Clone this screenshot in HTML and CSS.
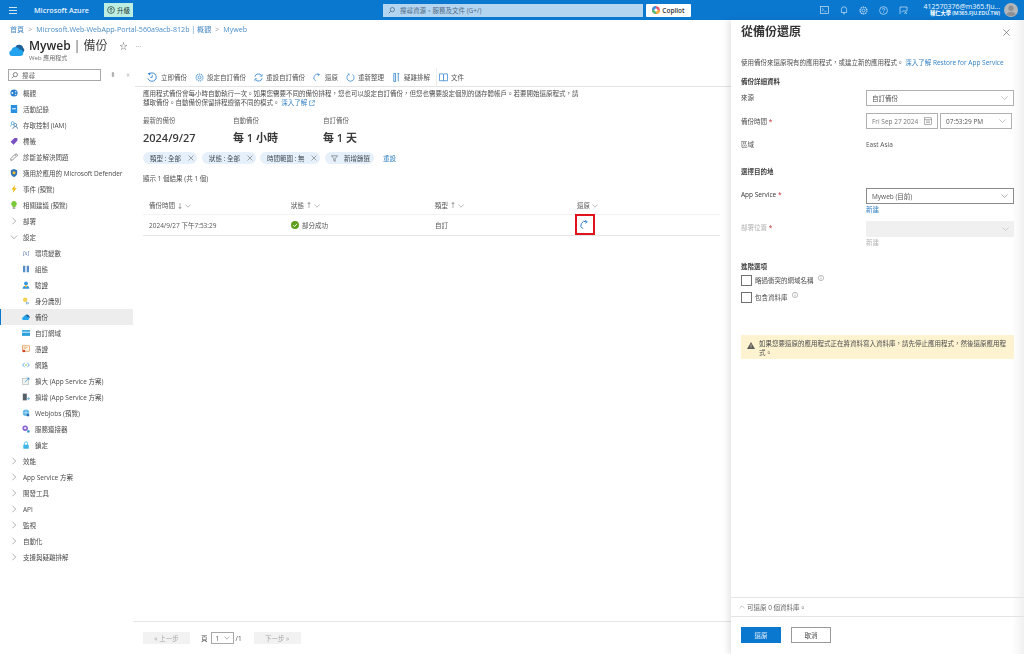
FILE: index.html
```html
<!DOCTYPE html>
<html lang="zh-Hant">
<head>
<meta charset="utf-8">
<title>Myweb | 備份</title>
<link rel="stylesheet" href="styles.css">
</head>
<body>
<div class="app">
  <header class="topbar">
    <svg class="hamburger" width="8" height="7" viewBox="0 0 8 7"><path d="M0 .5h8M0 3.5h8M0 6.5h8" stroke="#cfe4f6" stroke-width="1"/></svg>
    <span class="brand">Microsoft Azure</span>
    <button class="upgrade"><svg width="8" height="8" viewBox="0 0 8 8"><circle cx="4" cy="4" r="3.4" fill="none" stroke="#1b3a34" stroke-width=".7"/><path d="M4 6V2.300M2.600 3.600 4 2.200l1.400 1.400" fill="none" stroke="#1b3a34" stroke-width=".7"/></svg>升級</button>
    <div class="global-search"><svg width="7" height="7" viewBox="0 0 8 8"><circle cx="5" cy="3" r="2.400" fill="none" stroke="#44607a" stroke-width=".8"/><path d="M3.200 4.800.8 7.200" stroke="#44607a" stroke-width=".8"/></svg><span>搜尋資源、服務及文件 (G+/)</span></div>
    <button class="copilot"><svg width="8" height="8" viewBox="0 0 8 8"><circle cx="4" cy="4" r="3.800" fill="#e8536b"/><path d="M4 4 8 4A4 4 0 0 1 4 8Z" fill="#f2a93b"/><path d="M4 4V8A4 4 0 0 1 0 4Z" fill="#5bb974"/><path d="M4 4H0A4 4 0 0 1 4 0Z" fill="#3f8fe0"/><circle cx="4" cy="4" r="1.600" fill="#fff"/></svg>Copilot</button>
    <div class="top-icons">
      <svg width="9" height="8" viewBox="0 0 9 8"><rect x=".4" y=".4" width="8.200" height="7.200" fill="none" stroke="#cfe4f6" stroke-width=".7"/><path d="m2 2.400 1.600 1.400L2 5.200M4.400 5.400h2" fill="none" stroke="#cfe4f6" stroke-width=".6"/></svg>
      <svg width="8" height="9" viewBox="0 0 8 9"><path d="M1.400 6.500V3.400a2.600 2.600 0 0 1 5.200 0v3.100ZM3 7.800h2" fill="none" stroke="#cfe4f6" stroke-width=".7"/></svg>
      <svg width="9" height="9" viewBox="0 0 9 9"><circle cx="4.500" cy="4.500" r="1.400" fill="none" stroke="#cfe4f6" stroke-width=".7"/><circle cx="4.500" cy="4.500" r="3.400" fill="none" stroke="#cfe4f6" stroke-width="1.200" stroke-dasharray="1.400 .7"/></svg>
      <svg width="9" height="9" viewBox="0 0 9 9"><circle cx="4.500" cy="4.500" r="3.900" fill="none" stroke="#cfe4f6" stroke-width=".7"/><path d="M3.300 3.500a1.200 1.200 0 1 1 1.700 1.100c-.4.2-.5.4-.5.8M4.500 6.200v.6" fill="none" stroke="#cfe4f6" stroke-width=".7"/></svg>
      <svg width="9" height="9" viewBox="0 0 9 9"><path d="M1 8V1h7v4H4L2.500 6M5.600 8l1-2 1.300 2" fill="none" stroke="#cfe4f6" stroke-width=".7"/></svg>
    </div>
    <div class="account">
      <span class="account-name">412570376@m365.fju...</span>
      <span class="account-org">輔仁大學 (M365.FJU.EDU.TW)</span>
    </div>
    <svg class="avatar" width="14" height="14" viewBox="0 0 14 14"><circle cx="7" cy="7" r="7" fill="#b4b7ba"/><circle cx="7" cy="5.200" r="2.600" fill="#8d9094"/><path d="M2.400 11.400a4.800 3.800 0 0 1 9.200 0 7 7 0 0 1-9.200 0Z" fill="#8d9094"/></svg>
  </header>

  <nav class="breadcrumb">
    <a>首頁</a><i>&gt;</i><a>Microsoft.Web-WebApp-Portal-560a9acb-812b | 概觀</a><i>&gt;</i><a>Myweb</a>
  </nav>

  <div class="page-head">
    <svg class="page-icon" width="16" height="16" viewBox="0 0 16 16"><path d="M6 6.500a4.200 4.200 0 0 1 8.200-.6 2.700 2.700 0 0 1 .3 4.100H8Z" fill="#1d6298"/><path d="M3 14a2.900 2.900 0 0 1-.6-5.700 4.200 4.200 0 0 1 8-.7 3.200 3.200 0 0 1 1.200 6.400Z" fill="#23a3ee"/></svg>
    <div class="page-titles">
      <h1>Myweb <span class="bar">|</span> <span class="thin">備份</span><span class="star">☆</span><span class="dots">···</span></h1>
      <p>Web 應用程式</p>
    </div>
  </div>

  <div class="workspace">
    <aside class="sidebar">
      <div class="side-search-row">
        <div class="side-search"><svg width="7" height="7" viewBox="0 0 8 8"><circle cx="5" cy="3" r="2.400" fill="none" stroke="#555" stroke-width=".8"/><path d="M3.200 4.800.8 7.200" stroke="#555" stroke-width=".8"/></svg><span>搜尋</span></div>
        <span class="side-tool">⬍</span><span class="side-tool">«</span>
      </div>
      <ul class="nav">
        <li class="item"><svg viewBox="0 0 10 10"><circle cx="5" cy="5" r="4.500" fill="#2a7fd0"/><circle cx="3" cy="5" r="1.100" fill="#fff"/><circle cx="7" cy="3.400" r="1" fill="#cfe4f6"/><circle cx="7" cy="6.800" r="1" fill="#cfe4f6"/></svg>概觀</li>
        <li class="item"><svg viewBox="0 0 10 10"><rect x="1" y="0" width="8" height="10" fill="#2a8fe0"/><rect x="2.600" y="4" width="4.800" height="1.400" fill="#e6f2fb"/></svg>活動記錄</li>
        <li class="item"><svg viewBox="0 0 10 10"><circle cx="3.400" cy="2.600" r="1.800" fill="none" stroke="#3f9ad8" stroke-width=".9"/><circle cx="6.600" cy="5" r="1.800" fill="none" stroke="#3b6f9e" stroke-width=".9"/><path d="M3.400 10a3.200 3 0 0 1 6.400 0" fill="none" stroke="#3b6f9e" stroke-width=".9"/><path d="M.4 7a3 3 0 0 1 2-2.400" fill="none" stroke="#3f9ad8" stroke-width=".9"/></svg>存取控制 (IAM)</li>
        <li class="item"><svg viewBox="0 0 10 10"><path d="M.8 6 5.600 1.200h3.600v3.600L4.400 9.600Z" fill="#7a4fc0"/></svg>標籤</li>
        <li class="item"><svg viewBox="0 0 10 10"><path d="M1 9 1 7 6 2l2 2-5 5ZM6.400 1.600a1.700 1.700 0 0 1 2.400 2.400" fill="none" stroke="#555" stroke-width=".8"/></svg>診斷並解決問題</li>
        <li class="item"><svg viewBox="0 0 10 10"><path d="M5 0 9 1.600V5c0 2.600-2 4.200-4 5-2-.8-4-2.400-4-5V1.600Z" fill="#2f72b8"/><circle cx="5" cy="4.600" r="1.900" fill="#f2c230"/></svg>適用於應用的 Microsoft Defender</li>
        <li class="item"><svg viewBox="0 0 10 10"><path d="M6.400 0 2 5.600h2.600L3.200 10 8.200 4H5.400Z" fill="#f0b400"/></svg>事件 (預覽)</li>
        <li class="item"><svg viewBox="0 0 10 10"><path d="M5 0a3.400 3.400 0 0 1 2 6.200V7.600H3V6.200A3.400 3.400 0 0 1 5 0Z" fill="#7cc83b"/><rect x="3.400" y="8" width="3.200" height="1.600" fill="#7f8a80"/></svg>相關建議 (預覽)</li>
        <li class="group"><svg viewBox="0 0 8 8"><path d="m2.500.8 3.200 3.200-3.200 3.200" fill="none" stroke="#777" stroke-width=".6"/></svg>部署</li>
        <li class="group"><svg viewBox="0 0 8 8"><path d="m.8 2.500 3.200 3.200 3.200-3.200" fill="none" stroke="#777" stroke-width=".6"/></svg>設定</li>
        <li class="item child"><span class="var-ico">[x]</span>環境變數</li>
        <li class="item child"><svg viewBox="0 0 10 10"><path d="M1.500 1h2v8h-2ZM6.500 1h2v8h-2Z" fill="#2f72b8"/><path d="M4.200 1h1.600v8H4.200Z" fill="#a6cdea"/></svg>組態</li>
        <li class="item child"><svg viewBox="0 0 10 10"><circle cx="5" cy="3" r="2.400" fill="#3596e0"/><path d="M.8 9.600a4.200 3.800 0 0 1 8.400 0Z" fill="#3596e0"/><rect x="3.800" y="5.200" width="2.400" height="2.400" fill="#f2c230"/></svg>驗證</li>
        <li class="item child"><svg viewBox="0 0 10 10"><circle cx="4" cy="3.400" r="2.800" fill="#f2d256"/><path d="M4.600 6h1.600l.6 3.400H5.400Z" fill="#88b8d8"/><circle cx="7.600" cy="7.600" r="1.400" fill="#9fc6e2"/></svg>身分識別</li>
        <li class="item child active"><svg viewBox="0 0 16 16"><path d="M6 6.500a4.200 4.200 0 0 1 8.200-.6 2.700 2.700 0 0 1 .3 4.100H8Z" fill="#1d6298"/><path d="M3 14a2.900 2.900 0 0 1-.6-5.700 4.200 4.200 0 0 1 8-.7 3.200 3.200 0 0 1 1.200 6.400Z" fill="#23a3ee"/></svg>備份</li>
        <li class="item child"><svg viewBox="0 0 10 10"><rect y="1.400" width="10" height="7.200" fill="#2aa0dc"/><rect y="3.400" width="10" height="1.200" fill="#e8f6fc"/></svg>自訂網域</li>
        <li class="item child"><svg viewBox="0 0 10 10"><rect x=".5" y="1" width="9" height="6.800" fill="#fff4e8" stroke="#d88a3a" stroke-width=".8"/><path d="M2 3h5M2 4.600h3" stroke="#d88a3a" stroke-width=".6"/><circle cx="2.400" cy="7.600" r="1.600" fill="#d83b2b"/></svg>憑證</li>
        <li class="item child"><svg viewBox="0 0 10 10"><path d="M3.400 2.200.8 5l2.600 2.800M6.600 2.200 9.200 5 6.600 7.800" fill="none" stroke="#3f9ad8" stroke-width="1"/><circle cx="5" cy="5" r="1" fill="#7fb33a"/></svg>網路</li>
        <li class="item child"><svg viewBox="0 0 10 10"><rect x=".8" y="1.600" width="7.600" height="7.600" fill="#eef2f0" stroke="#a5b0a8" stroke-width=".7"/><path d="M3.600 6.400 8.600 1.400M6 1.200h2.800V4" fill="none" stroke="#3f9ad8" stroke-width=".9"/></svg>擴大 (App Service 方案)</li>
        <li class="item child"><svg viewBox="0 0 10 10"><rect x="1" y=".8" width="5" height="8.400" fill="#57606a"/><path d="M5.400 7h4M7.600 5.200 9.400 7 7.600 8.800" fill="none" stroke="#3f9ad8" stroke-width=".9"/></svg>擴增 (App Service 方案)</li>
        <li class="item child"><svg viewBox="0 0 10 10"><circle cx="5" cy="4.600" r="4" fill="#58b4e8"/><path d="M1.400 4.600h7.200M5 .8v7.600" stroke="#e8f6fc" stroke-width=".6"/><circle cx="7.400" cy="7.600" r="1.800" fill="#2d6fae"/></svg>WebJobs (預覽)</li>
        <li class="item child"><svg viewBox="0 0 10 10"><circle cx="4" cy="4" r="3.400" fill="#8a63d2"/><circle cx="4" cy="4" r="1.400" fill="#f3eefb"/><circle cx="8" cy="8" r="1.600" fill="#3f9ad8"/></svg>服務連接器</li>
        <li class="item child"><svg viewBox="0 0 10 10"><path d="M3 5V3a2 2 0 0 1 4 0v2" fill="none" stroke="#3fb4e8" stroke-width="1"/><rect x="1.600" y="4.600" width="6.800" height="5.200" rx=".6" fill="#3fb4e8"/></svg>鎖定</li>
        <li class="group"><svg viewBox="0 0 8 8"><path d="m2.500.8 3.200 3.200-3.200 3.200" fill="none" stroke="#777" stroke-width=".6"/></svg>效能</li>
        <li class="group"><svg viewBox="0 0 8 8"><path d="m2.500.8 3.200 3.200-3.200 3.200" fill="none" stroke="#777" stroke-width=".6"/></svg>App Service 方案</li>
        <li class="group"><svg viewBox="0 0 8 8"><path d="m2.500.8 3.200 3.200-3.200 3.200" fill="none" stroke="#777" stroke-width=".6"/></svg>開發工具</li>
        <li class="group"><svg viewBox="0 0 8 8"><path d="m2.500.8 3.200 3.200-3.200 3.200" fill="none" stroke="#777" stroke-width=".6"/></svg>API</li>
        <li class="group"><svg viewBox="0 0 8 8"><path d="m2.500.8 3.200 3.200-3.200 3.200" fill="none" stroke="#777" stroke-width=".6"/></svg>監視</li>
        <li class="group"><svg viewBox="0 0 8 8"><path d="m2.500.8 3.200 3.200-3.200 3.200" fill="none" stroke="#777" stroke-width=".6"/></svg>自動化</li>
        <li class="group"><svg viewBox="0 0 8 8"><path d="m2.500.8 3.200 3.200-3.200 3.200" fill="none" stroke="#777" stroke-width=".6"/></svg>支援與疑難排解</li>
      </ul>
    </aside>

    <main class="content">
      <div class="toolbar">
        <span class="tool"><svg class="first" viewBox="0 0 10 10"><path d="M1 6.400A4.200 4.200 0 1 0 3 1.400" fill="none" stroke="#2a7fd0" stroke-width=".9"/><path d="M5.200 2.800v2.600H3.200" fill="none" stroke="#2a7fd0" stroke-width=".8"/><path d="M.6 1.400 3.400 .6 3 3.400Z" fill="#2a7fd0"/></svg>立即備份</span>
        <span class="tool"><svg viewBox="0 0 10 10"><circle cx="5" cy="5" r="3.800" fill="none" stroke="#6ba6da" stroke-width="1.400" stroke-dasharray="1.400 .7"/><circle cx="5" cy="5" r="1.600" fill="none" stroke="#2a7fd0" stroke-width=".8"/></svg>設定自訂備份</span>
        <span class="tool"><svg viewBox="0 0 10 10"><path d="M1 4.200A4 4 0 0 1 8.400 3M9 5.800A4 4 0 0 1 1.600 7" fill="none" stroke="#2a7fd0" stroke-width=".9"/><path d="M9 1v2.600H6.400M1 9V6.400h2.600" fill="none" stroke="#2a7fd0" stroke-width=".7"/></svg>重設自訂備份</span>
        <span class="tool"><svg viewBox="0 0 10 10"><path d="M6.600 1.800A3.800 3.800 0 0 0 3 8.800" fill="none" stroke="#2a7fd0" stroke-width=".8"/><path d="M5 .4 7.400 1.800 5.400 3.400" fill="none" stroke="#2a7fd0" stroke-width=".7"/></svg>還原</span>
        <span class="tool"><svg viewBox="0 0 10 10"><path d="M3 1.600A4 4 0 1 0 7 1.600" fill="none" stroke="#2a7fd0" stroke-width=".8"/><path d="M1.600 1h2v2" fill="none" stroke="#2a7fd0" stroke-width=".6"/></svg>重新整理</span>
        <span class="tool"><svg viewBox="0 0 10 10"><path d="M2 .6h2v8.800H2ZM6 .6h2" fill="none" stroke="#2a7fd0" stroke-width=".9"/><path d="M7 .6v8.800" stroke="#6ba6da" stroke-width="1.200"/></svg>疑難排解</span>
        <span class="tool doc"><svg viewBox="0 0 10 10"><path d="M.6 1h3.800c.3 0 .6.3.6.6.1-.3.3-.6.6-.6h3.800v7.600H.6Z" fill="none" stroke="#2a7fd0" stroke-width=".8"/><path d="M5 1.600v7" stroke="#2a7fd0" stroke-width=".9"/></svg>文件</span>
      </div>

      <div class="body">
        <p class="intro">應用程式備份會每小時自動執行一次。如果您需要不同的備份排程，您也可以設定自訂備份，但您也需要設定個別的儲存體帳戶。若要開始還原程式，請<br>擷取備份。自動備份保留排程遵循不同的模式。 <a>深入了解 <svg width="6" height="6" viewBox="0 0 6 6"><path d="M2.400 1H.5v4.500h4.500V3.600M3.400.5h2.100v2.100M5.400.6 2.800 3.200" fill="none" stroke="#0f6cbd" stroke-width=".5"/></svg></a></p>

        <div class="summary">
          <div class="stat"><span>最新的備份</span><strong>2024/9/27</strong></div>
          <div class="stat"><span>自動備份</span><strong>每 1 小時</strong></div>
          <div class="stat"><span>自訂備份</span><strong>每 1 天</strong></div>
        </div>

        <div class="filters">
          <span class="pill">類型 : 全部<svg width="6" height="6" viewBox="0 0 6 6"><path d="m.5.5 5 5m0-5-5 5" stroke="#555" stroke-width=".5"/></svg></span>
          <span class="pill">狀態 : 全部<svg width="6" height="6" viewBox="0 0 6 6"><path d="m.5.5 5 5m0-5-5 5" stroke="#555" stroke-width=".5"/></svg></span>
          <span class="pill">時間範圍 : 無<svg width="6" height="6" viewBox="0 0 6 6"><path d="m.5.5 5 5m0-5-5 5" stroke="#555" stroke-width=".5"/></svg></span>
          <span class="pill add"><svg width="7" height="7" viewBox="0 0 7 7"><path d="M.4.8h6.200L4.200 3.600v2.800L2.800 5.600v-2Z" fill="none" stroke="#444" stroke-width=".5"/></svg>新增篩選</span>
          <a class="reset">重設</a>
        </div>

        <p class="count">顯示 1 個結果 (共 1 個)</p>

        <div class="table">
          <div class="row head">
            <span>備份時間 ↓ <svg width="6" height="4" viewBox="0 0 6 4"><path d="m.4.6 2.600 2.600L5.600.6" fill="none" stroke="#777" stroke-width=".5"/></svg></span>
            <span>狀態 ↑ <svg width="6" height="4" viewBox="0 0 6 4"><path d="m.4.6 2.600 2.600L5.600.6" fill="none" stroke="#777" stroke-width=".5"/></svg></span>
            <span>類型 ↑ <svg width="6" height="4" viewBox="0 0 6 4"><path d="m.4.6 2.600 2.600L5.600.6" fill="none" stroke="#777" stroke-width=".5"/></svg></span>
            <span>還原 <svg width="6" height="4" viewBox="0 0 6 4"><path d="m.4.6 2.600 2.600L5.600.6" fill="none" stroke="#777" stroke-width=".5"/></svg></span>
          </div>
          <div class="row data">
            <span>2024/9/27 下午7:53:29</span>
            <span class="status"><svg width="8" height="8" viewBox="0 0 8 8"><circle cx="4" cy="4" r="4" fill="#5c9e1c"/><path d="m2 4.100 1.500 1.500L6 2.800" fill="none" stroke="#fff" stroke-width=".9"/></svg>部分成功</span>
            <span>自訂</span>
            <span class="restore-cell"><span class="restore-mark"><svg width="10" height="10" viewBox="0 0 10 10"><path d="M6.600 1.800A3.800 3.800 0 0 0 3 8.800" fill="none" stroke="#2a7fd0" stroke-width="1"/><path d="M5 .4 7.400 1.800 5.400 3.400" fill="none" stroke="#2a7fd0" stroke-width=".8"/></svg></span></span>
          </div>
        </div>
      </div>

      <div class="pager">
        <button class="page-btn">« 上一步</button>
        <span class="page-label">頁</span>
        <span class="page-select">1<svg width="6" height="4" viewBox="0 0 6 4"><path d="m.4.6 2.600 2.600L5.600.6" fill="none" stroke="#666" stroke-width=".5"/></svg></span>
        <span class="page-label">/1</span>
        <button class="page-btn next">下一步 »</button>
      </div>
    </main>
  </div>

  <section class="panel">
    <div class="panel-head">
      <h2>從備份還原</h2>
      <svg width="7" height="7" viewBox="0 0 7 7"><path d="m.4.4 6.200 6.200m0-6.200L.4 6.600" stroke="#555" stroke-width=".6"/></svg>
    </div>
    <div class="panel-body">
      <p class="panel-intro">使用備份來還原現有的應用程式，或建立新的應用程式。 <a>深入了解 Restore for App Service</a></p>
      <h3 class="sec first">備份詳細資料</h3>
      <div class="field r-source"><label>來源</label><div class="select">自訂備份<svg width="7" height="4" viewBox="0 0 7 4"><path d="m.4.4 3.100 3.100L6.600.4" fill="none" stroke="#888" stroke-width=".5"/></svg></div></div>
      <div class="field r-time"><label>備份時間 <em>*</em></label>
        <div class="dt">
          <div class="select date">Fri Sep 27 2024<svg width="8" height="8" viewBox="0 0 8 8"><rect x=".3" y=".8" width="7.400" height="6.900" fill="none" stroke="#666" stroke-width=".5"/><path d="M.3 2.600h7.400M2 4h4M2 5.600h4" stroke="#666" stroke-width=".5"/></svg></div>
          <div class="select time">07:53:29 PM<svg width="7" height="4" viewBox="0 0 7 4"><path d="m.4.4 3.100 3.100L6.600.4" fill="none" stroke="#888" stroke-width=".5"/></svg></div>
        </div>
      </div>
      <div class="field r-region"><label>區域</label><span class="value">East Asia</span></div>
      <h3 class="sec dest">選擇目的地</h3>
      <div class="field r-app"><label>App Service <em>*</em></label>
        <div class="stack"><div class="select strong">Myweb (目前)<svg width="7" height="4" viewBox="0 0 7 4"><path d="m.4.4 3.100 3.100L6.600.4" fill="none" stroke="#666" stroke-width=".5"/></svg></div><a class="new">新建</a></div>
      </div>
      <div class="field r-deploy disabled"><label>部署位置 <em>*</em></label>
        <div class="stack"><div class="select off"><svg width="7" height="4" viewBox="0 0 7 4"><path d="m.4.4 3.100 3.100L6.600.4" fill="none" stroke="#aaa" stroke-width=".5"/></svg></div><a class="new">新建</a></div>
      </div>
      <h3 class="sec adv">進階選項</h3>
      <label class="check"><span class="box"></span>略過衝突的網域名稱<svg width="6" height="6" viewBox="0 0 6 6"><circle cx="3" cy="3" r="2.700" fill="none" stroke="#666" stroke-width=".4"/><path d="M3 2.600v2M3 1.400v.6" stroke="#666" stroke-width=".5"/></svg></label>
      <label class="check"><span class="box"></span>包含資料庫<svg width="6" height="6" viewBox="0 0 6 6"><circle cx="3" cy="3" r="2.700" fill="none" stroke="#666" stroke-width=".4"/><path d="M3 2.600v2M3 1.400v.6" stroke="#666" stroke-width=".5"/></svg></label>
      <div class="warn"><svg width="8" height="7" viewBox="0 0 8 7"><path d="M4 0 8 7H0Z" fill="#605e5c"/><path d="M4 2.400v2.400M4 5.400v.6" stroke="#fff4ce" stroke-width=".6"/></svg><p>如果您要還原的應用程式正在將資料寫入資料庫，請先停止應用程式，然後還原應用程式。</p></div>
    </div>
    <div class="panel-note"><svg width="6" height="4" viewBox="0 0 6 4"><path d="m.4 3.400 2.600-2.600 2.600 2.600" fill="none" stroke="#888" stroke-width=".5"/></svg>可還原 0 個資料庫。</div>
    <div class="panel-foot"><button class="primary">還原</button><button class="secondary">取消</button></div>
  </section>
</div>
</body>
</html>
```
FILE: styles.css
```css
* { box-sizing: border-box; }
html, body { margin: 0; height: 100%; overflow: hidden; background: #fff; }
body { font-family: "Open Sans", "Noto Sans CJK TC", sans-serif; font-size: 6.5px; color: #454545; }
button { font-family: inherit; }
p, h1, h2, h3, ul { margin: 0; padding: 0; }
a { color: #2f7fc4; }

.app { position: relative; width: 1024px; height: 654px; display: flex; flex-direction: column; overflow: hidden; filter: blur(.3px); }

/* top bar */
.topbar { height: 20px; flex: none; background: #0b78d0; display: flex; align-items: center; color: #fff; }
.hamburger { margin-left: 9px; flex: none; }
.brand { margin-left: 17px; width: 70px; font-size: 7.2px; font-weight: 600; color: #e9f4fc; white-space: nowrap; }
.upgrade { width: 29px; height: 14px; padding: 0; border: 0; background: #bdeee2; color: #1b3a34; font-size: 6.5px; display: flex; align-items: center; justify-content: center; gap: 2px; }
.global-search { margin-left: 250px; width: 260px; height: 13px; background: #b4d5f0; display: flex; align-items: center; gap: 5px; padding-left: 5px; color: #4d6a85; }
.copilot { margin-left: 3px; width: 45px; height: 13px; padding: 0; border: 0; border-radius: 1px; background: #fff; color: #333; font-size: 6.5px; font-weight: 600; display: flex; align-items: center; justify-content: center; gap: 2px; }
.top-icons { margin-left: 129px; display: flex; align-items: center; gap: 11px; }
.account { margin-left: 11px; width: 81px; display: flex; flex-direction: column; align-items: flex-end; line-height: 7.5px; }
.account-name { font-size: 7px; color: #f2f8fd; white-space: nowrap; }
.account-org { font-size: 5.2px; font-weight: 600; white-space: nowrap; }
.avatar { margin-left: 4px; flex: none; }

/* page head */
.breadcrumb { height: 17px; flex: none; padding-left: 10px; display: flex; align-items: center; gap: 4px; color: #4a8cc6; font-size: 7.1px; white-space: nowrap; }
.breadcrumb a { color: #4a8cc6; }
.breadcrumb i { font-style: normal; color: #999; }
.page-head { height: 31px; flex: none; display: flex; padding-left: 9px; gap: 4px; }
.page-icon { margin-top: 5px; flex: none; }
.page-titles h1 { font-size: 12px; line-height: 17px; font-weight: 600; color: #2b2b2b; white-space: nowrap; }
.page-titles .bar { font-weight: 400; color: #555; }
.page-titles .thin { font-weight: 400; color: #444; }
.star { font-size: 8px; margin-left: 12px; font-weight: 400; color: #555; vertical-align: 1px; }
.dots { font-size: 7px; margin-left: 8px; font-weight: 400; color: #999; vertical-align: 1px; }
.page-titles p { font-size: 6px; color: #707070; line-height: 7px; }

.workspace { flex: 1; min-height: 0; display: flex; }

/* sidebar */
.sidebar { width: 133px; flex: none; }
.side-search-row { height: 17px; display: flex; align-items: flex-start; padding: 1px 0 0 8px; }
.side-search { width: 93px; height: 12px; border: 1px solid #a8a8a8; display: flex; align-items: center; gap: 4px; padding-left: 2px; color: #666; }
.side-tool { color: #aaa; font-size: 7px; margin-left: 9px; line-height: 12px; width: 6px; text-align: center; }
.nav { list-style: none; }
.item, .group { height: 16px; display: flex; align-items: center; white-space: nowrap; color: #4a4a4a; }
.item { padding-left: 10px; gap: 5px; }
.item svg { width: 8px; height: 8px; flex: none; }
.item.child { padding-left: 22px; }
.group { padding-left: 10px; gap: 5px; }
.group svg { width: 8px; height: 8px; flex: none; }
.item.active { background: #ededed; box-shadow: inset 1px 0 0 #0b78d0; }
.var-ico { width: 8px; font-size: 5.5px; font-style: italic; color: #3a5fa0; font-family: "Liberation Serif", serif; text-align: center; flex: none; }

/* content */
.content { flex: 1; min-width: 0; display: flex; flex-direction: column; padding-right: 293px; }
.toolbar { height: 19px; flex: none; margin-left: 2px; display: flex; align-items: center; gap: 8px; padding-left: 14px; border-bottom: 1px solid #e4e4e4; white-space: nowrap; color: #555; }
.tool { display: flex; align-items: center; gap: 3px; }
.tool svg { width: 9px; height: 9px; flex: none; }
.tool svg.first { width: 10px; height: 10px; margin-left: -2px; margin-right: 1px; }
.tool.doc { border-left: 1px solid #eee; padding-left: 2px; height: 18px; margin-left: -2px; }
.body { flex: 1; padding: 2px 0 0 10px; min-height: 0; }
.intro { line-height: 9px; white-space: nowrap; color: #4d4d4d; }
.intro a svg { vertical-align: -0.5px; }
.summary { display: flex; margin-top: 9px; }
.stat { width: 90px; display: flex; flex-direction: column; }
.stat span { line-height: 9px; color: #5f5f5f; }
.stat strong { font-size: 11px; line-height: 15px; margin-top: 5px; font-weight: 600; color: #3a3a3a; }
.filters { display: flex; align-items: center; gap: 5px; margin-top: 7px; height: 12px; }
.pill { height: 12px; border-radius: 6px; background: #e6f0fa; display: flex; align-items: center; justify-content: space-between; padding: 0 3px 0 7px; color: #3d4a55; }
.pill:nth-child(1), .pill:nth-child(2) { width: 54px; }
.pill:nth-child(3) { width: 60px; margin-left: -1px; }
.pill.add { width: 49px; justify-content: flex-start; gap: 6px; padding-left: 6px; }
.reset { margin-left: 4px; }
.count { margin-top: 10px; line-height: 9px; color: #4d4d4d; }
.table { margin-top: 12px; width: 577px; }
.row { display: grid; grid-template-columns: 142px 144px 142px 1fr; padding-left: 6px; align-items: center; white-space: nowrap; }
.row.head { height: 20px; border-bottom: 1px solid #f3f3f3; color: #555; }
.row.data { height: 21px; border-bottom: 1px solid #e6e6e6; color: #555; }
.status { display: flex; align-items: center; gap: 3px; }
.restore-cell { position: relative; height: 100%; display: block; }
.restore-mark { position: absolute; left: -2px; top: -1px; width: 20px; height: 21px; border: 2px solid #e0131a; display: flex; align-items: center; justify-content: center; }
.pager { height: 33px; flex: none; border-top: 1px solid #e6e6e6; display: flex; align-items: center; padding-left: 10px; color: #555; }
.page-btn { width: 47px; height: 12px; padding: 0; border: 0; background: #f2f2f2; color: #a8a8a8; font-size: 6.5px; }
.page-label { margin-left: 2px; }
.page-label:nth-of-type(1) { margin-left: 11px; }
.page-select { width: 23px; height: 12px; margin-left: 3px; border: 1px solid #a8a8a8; display: flex; align-items: center; justify-content: space-between; padding: 0 3px 0 4px; }
.page-btn.next { margin-left: 12px; }

/* side panel */
.panel { position: absolute; left: 731px; top: 20px; bottom: 0; right: 0; display: flex; flex-direction: column; background: linear-gradient(to right, #fff 96%, #f0f0f0); box-shadow: -3px 0 6px rgba(0,0,0,.1); }
.panel-head { height: 24px; flex: none; display: flex; align-items: center; justify-content: space-between; padding: 0 14px 0 10px; }
.panel-head h2 { font-size: 12px; line-height: 20px; font-weight: 600; color: #333; }
.panel-body { flex: 1; min-height: 0; padding: 14px 10px 0; }
.panel-intro { line-height: 9px; color: #4d4d4d; white-space: nowrap; }
.sec { font-size: 6.5px; font-weight: 600; line-height: 9px; color: #3f3f3f; }
.sec.first { margin-top: 10px; }
.sec.dest { margin-top: 18px; }
.sec.adv { margin-top: 15px; }
.field { display: flex; align-items: flex-start; white-space: nowrap; }
.field label { width: 125px; flex: none; line-height: 9px; color: #4d4d4d; }
.field em { color: #c4262e; font-style: normal; }
.r-source { margin-top: 4px; height: 17px; }
.r-source label, .r-time label { padding-top: 3px; }
.r-time { margin-top: 6px; height: 17px; }
.r-time label { padding-top: 4px; }
.r-region { margin-top: 10px; }
.value { color: #555; line-height: 9px; }
.r-app { margin-top: 12px; }
.r-app label { padding-top: 2px; font-weight: 500; color: #333; }
.r-deploy { margin-top: 7px; }
.r-deploy label { padding-top: 2px; color: #b0b0b0; }
.select { width: 148px; height: 16px; border: 1px solid #b0b0b0; display: flex; align-items: center; justify-content: space-between; padding: 0 5px; color: #555; }
.select.strong { border-color: #8a8a8a; }
.select.off { border: 0; background: #f0f0f0; justify-content: flex-end; }
.dt { display: flex; gap: 2px; }
.select.date { width: 72px; color: #777; }
.select.time { width: 72px; }
.stack { display: flex; flex-direction: column; }
.new { line-height: 9px; margin-top: 1px; }
.disabled .new { color: #b5b5b5; }
.check { display: flex; align-items: center; gap: 3px; height: 12px; color: #4d4d4d; white-space: nowrap; }
.check svg { margin-bottom: 4px; margin-left: 1px; }
.box { width: 11px; height: 11px; border: 1px solid #707070; background: #fff; flex: none; }
.sec.adv + .check { margin-top: 3px; }
.check + .check { margin-top: 5px; }
.warn { margin-top: 32px; height: 24px; background: #fdf3d0; display: flex; align-items: flex-start; padding: 5px 6px 0 6px; gap: 4px; }
.warn svg { flex: none; margin-top: 2px; }
.warn p { line-height: 8.5px; color: #4d4d4d; }
.panel-note { height: 20px; flex: none; border-top: 1px solid #e4e4e4; border-bottom: 1px solid #e4e4e4; display: flex; align-items: center; gap: 2px; padding-left: 8px; color: #666; }
.panel-foot { height: 37px; flex: none; display: flex; gap: 10px; padding: 10px 0 0 10px; }
.primary, .secondary { width: 40px; height: 16px; padding: 0; font-size: 6.5px; }
.primary { border: 0; background: #0b78d0; color: #e8f3fc; }
.secondary { border: 1px solid #9a9a9a; background: #fff; color: #444; }
```
